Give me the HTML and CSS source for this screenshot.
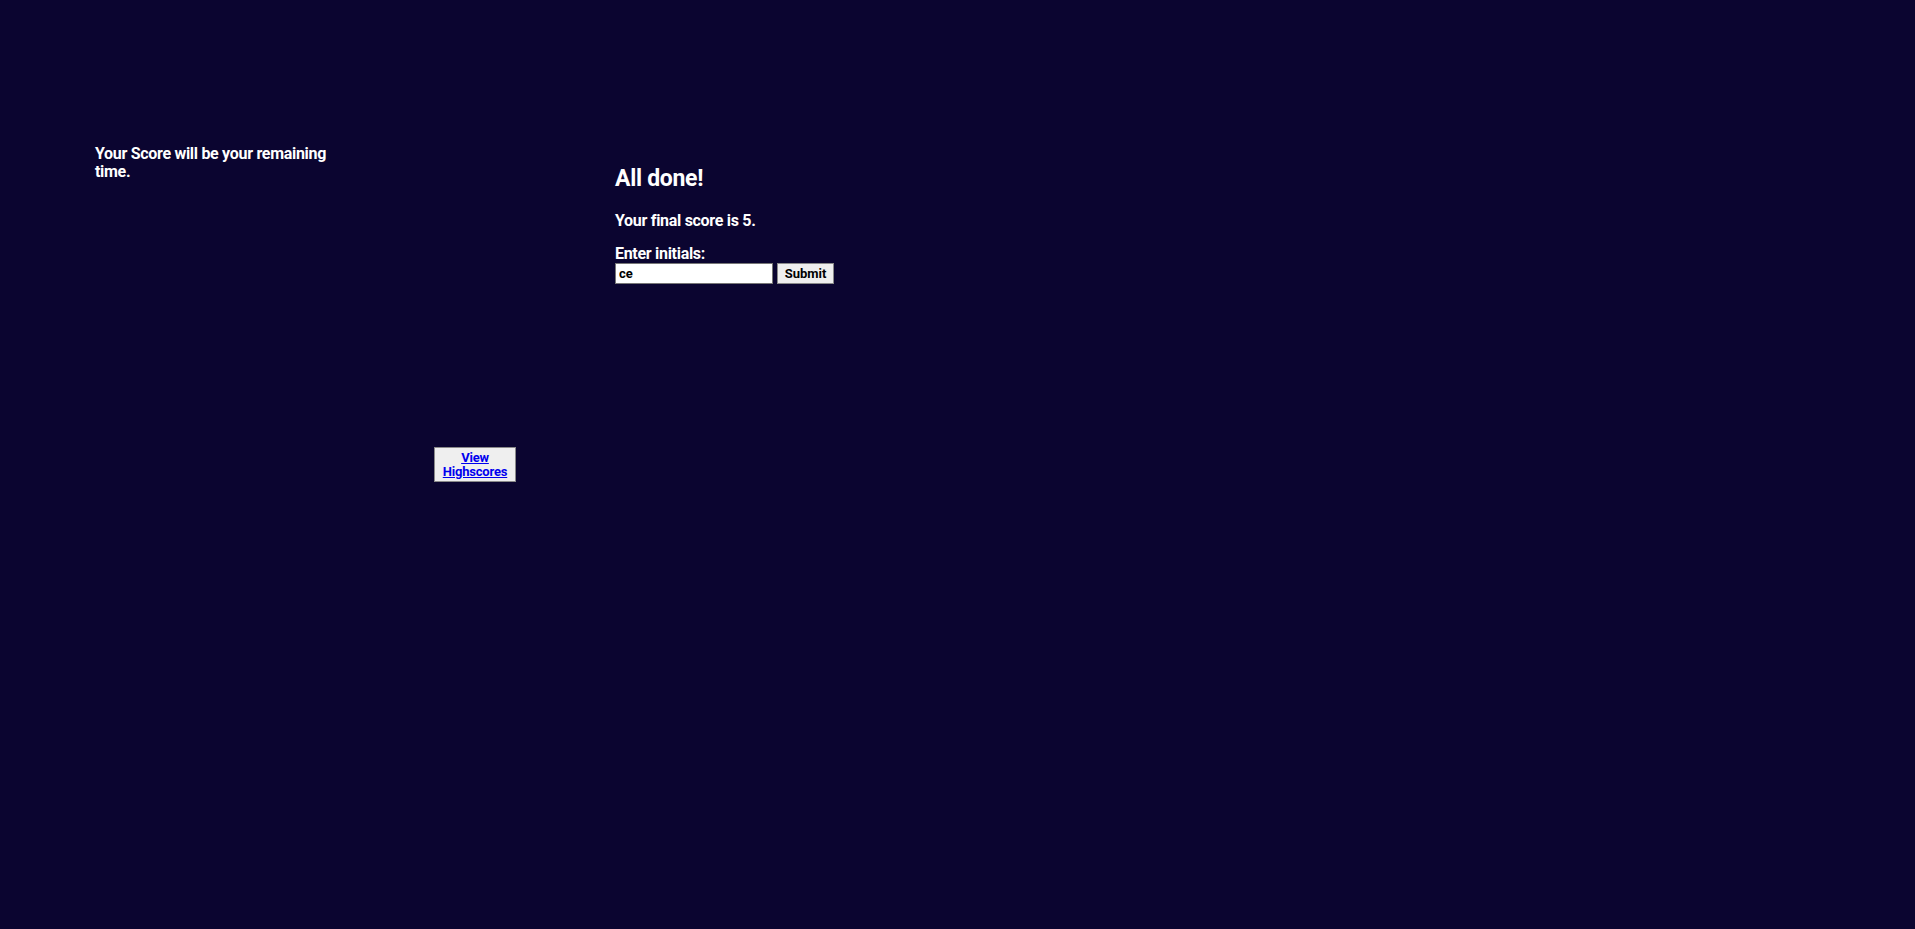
FILE: index.html
```html
<!DOCTYPE html>
<html lang="en">
<head>
<meta charset="utf-8">
<title>Code Quiz</title>
<link rel="stylesheet" href="styles.css">
</head>
<body>
<div class="page">
  <aside class="info">
    <p>Your Score will be your remaining time.</p>
  </aside>
  <div class="nav">
    <button class="hs-btn" type="button"><a href="#">View Highscores</a></button>
  </div>
  <main class="quiz">
    <h1>All done!</h1>
    <p class="final">Your final score is 5.</p>
    <form class="entry">
      <label for="initials">Enter initials:</label>
      <div class="row">
        <input id="initials" type="text" value="ce">
        <button type="button" class="submit">Submit</button>
      </div>
    </form>
  </main>
</div>
</body>
</html>
```
FILE: styles.css
```css
html, body {
  margin: 0;
  padding: 0;
  height: 100%;
}
body {
  background: #0b0530;
  color: #ffffff;
  font-family: Roboto, "Liberation Sans", Arial, sans-serif;
  font-weight: bold;
  letter-spacing: -0.3px;
}
.page {
  display: grid;
  grid-template-columns: 95px 339px 181px 1fr;
  grid-template-areas: ". info nav quiz";
  padding-top: 145px;
}
.info {
  grid-area: info;
  width: 262px;
}
.info p {
  margin: 0;
  font-size: 16px;
  line-height: 18px;
}
.nav {
  grid-area: nav;
  padding-top: 302px;
}
.hs-btn {
  width: 82px;
  height: 35px;
  padding: 0 3px;
  background: #efefef;
  border: 1px solid #8a8a8a;
  border-radius: 0;
  font-family: inherit;
  font-weight: bold;
  font-size: 13px;
  line-height: 14px;
  letter-spacing: -0.2px;
}
.hs-btn a {
  color: #0000ee;
  text-decoration: underline;
}
.quiz {
  grid-area: quiz;
  padding-top: 20px;
}
.quiz h1 {
  margin: 0;
  font-size: 23px;
  line-height: 28px;
}
.final {
  margin: 18px 0 0 0;
  font-size: 16px;
  line-height: 19px;
}
.entry {
  margin-top: 15px;
}
.entry label {
  display: block;
  font-size: 16px;
  line-height: 17px;
}
.row {
  display: flex;
  gap: 4px;
  margin-top: 1px;
}
.row input {
  width: 158px;
  height: 21px;
  box-sizing: border-box;
  margin: 0;
  padding: 1px 3px;
  border: 1px solid #767676;
  font-family: inherit;
  font-weight: bold;
  font-size: 13px;
  color: #000;
  background: #fff;
}
.submit {
  width: 57px;
  height: 21px;
  margin: 0;
  padding: 0 4px;
  background: #efefef;
  border: 1px solid #8a8a8a;
  border-radius: 0;
  font-family: inherit;
  font-weight: bold;
  font-size: 13px;
  color: #000;
}
```
